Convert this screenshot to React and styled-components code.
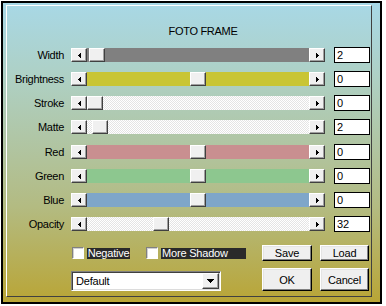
import React from 'react'
import styled, { createGlobalStyle } from 'styled-components'

const Global = createGlobalStyle`
  html, body { margin: 0; padding: 0; background: #fff; }
  body {
    font-family: "Liberation Sans", Arial, sans-serif;
    font-size: 11px;
    color: #000;
  }
`

const Frame = styled.div`
  margin: 1px 0 0 1px;
  width: 381px;
  height: 303px;
  box-sizing: border-box;
  border: 2px solid #000;
  padding: 2px 8px 5px 3px;
  background: linear-gradient(to bottom, #a8d8e6 0%, #aed0c4 25%, #b0c6a6 45%, #b3bb82 68%, #b9a536 100%);
`

const Panel = styled.div`
  height: 100%;
  box-sizing: border-box;
  border: 1px solid;
  border-color: #fff #404040 #404040 #fff;
`

const Title = styled.div`
  margin: 19px 0 5px;
  padding-left: 28px;
  height: 13px;
  line-height: 13px;
  text-align: center;
  letter-spacing: -0.3px;
`

const Row = styled.div`
  display: flex;
  align-items: center;
  height: 24px;
  margin-top: ${p => (p.$shift ? '1px' : '0')};
`

const Label = styled.div`
  width: 57px;
  margin-right: 7px;
  text-align: right;
  line-height: 13px;
  letter-spacing: -0.3px;
  white-space: nowrap;
`

const ScrollBar = styled.div`
  display: flex;
  width: 254px;
  height: 14px;
  margin-right: 9px;
`

const raised = `
  box-sizing: border-box;
  background: #f0f0f0;
  border: 1px solid;
  border-color: #fff #404040 #404040 #fff;
  box-shadow: inset -1px -1px #a0a0a0;
`

const ArrowButton = styled.div`
  ${raised}
  width: 16px;
  height: 14px;
  display: flex;
  align-items: center;
  justify-content: center;
`

const Track = styled.div`
  position: relative;
  flex: 1;
  background-color: ${p => p.$color || '#fff'};
  ${p =>
    p.$color
      ? ''
      : `background-image: repeating-conic-gradient(#e4e4e4 0 25%, #fff 0 50%);
         background-size: 2px 2px;`}
`

const Thumb = styled.div`
  ${raised}
  position: absolute;
  top: 0;
  width: 16px;
  height: 14px;
`

const ValueBox = styled.div`
  width: 36px;
  height: 16px;
  box-sizing: border-box;
  border: 1px solid #000;
  background: #fff;
  padding-left: 2px;
  line-height: 14px;
`

const Bottom = styled.div`
  display: flex;
  margin-top: 9px;
  padding-left: 64px;
`

const LeftCol = styled.div`
  width: 191px;
  height: 46px;
  display: flex;
  flex-direction: column;
  justify-content: space-between;
`

const CheckRow = styled.div`
  display: flex;
  align-items: center;
  height: 16px;
  padding-left: 1px;
`

const CheckBox = styled.div`
  width: 12px;
  height: 12px;
  box-sizing: border-box;
  background: #fff;
  border: 1px solid;
  border-color: #808080 #fff #fff #808080;
  box-shadow: inset 1px 1px #d0d0d0;
  margin-right: 3px;
`

const CheckLabel = styled.div`
  background: #2a2a2a;
  color: #fff;
  height: 11px;
  line-height: 11px;
  padding: 0 1px;
  letter-spacing: -0.2px;
  width: ${p => (p.$w ? `${p.$w}px` : 'auto')};
  box-sizing: border-box;
  margin-right: 16px;
  white-space: nowrap;
`

const Combo = styled.div`
  width: 150px;
  height: 20px;
  box-sizing: border-box;
  background: #fff;
  border: 1px solid;
  border-color: #808080 #fff #fff #808080;
  box-shadow: inset 1px 1px #404040, inset -1px -1px #dcdcdc;
  display: flex;
  align-items: center;
  justify-content: space-between;
  padding: 1px 1px 1px 4px;
`

const ComboText = styled.span`
  letter-spacing: -0.2px;
`

const DropButton = styled.div`
  ${raised}
  width: 17px;
  height: 16px;
  display: flex;
  align-items: center;
  justify-content: center;
`

const ButtonGrid = styled.div`
  display: grid;
  grid-template-columns: 50px 49px;
  grid-template-rows: 16px 23px;
  column-gap: 8px;
  row-gap: 7px;
`

const Button = styled.div`
  box-sizing: border-box;
  background: #efefef;
  border: 1px solid;
  border-color: #fff #000 #000 #fff;
  box-shadow: inset -1px -1px #808080, inset 1px 1px #e4e4e4;
  display: flex;
  align-items: center;
  justify-content: center;
  letter-spacing: -0.2px;
`

const LeftArrow = () => (
  <svg width="3" height="5" shapeRendering="crispEdges">
    <rect x="0" y="2" width="1" height="1" fill="#000" />
    <rect x="1" y="1" width="1" height="3" fill="#000" />
    <rect x="2" y="0" width="1" height="5" fill="#000" />
  </svg>
)

const RightArrow = () => (
  <svg width="3" height="5" shapeRendering="crispEdges">
    <rect x="0" y="0" width="1" height="5" fill="#000" />
    <rect x="1" y="1" width="1" height="3" fill="#000" />
    <rect x="2" y="2" width="1" height="1" fill="#000" />
  </svg>
)

const DownArrow = () => (
  <svg width="7" height="4" shapeRendering="crispEdges">
    <rect x="0" y="0" width="7" height="1" fill="#000" />
    <rect x="1" y="1" width="5" height="1" fill="#000" />
    <rect x="2" y="2" width="3" height="1" fill="#000" />
    <rect x="3" y="3" width="1" height="1" fill="#000" />
  </svg>
)

const sliders = [
  { name: 'Width', value: '2', pos: 2, color: '#808080' },
  { name: 'Brightness', value: '0', pos: 103, color: '#c9c534' },
  { name: 'Stroke', value: '0', pos: 0 },
  { name: 'Matte', value: '2', pos: 5 },
  { name: 'Red', value: '0', pos: 103, color: '#c98f90', shift: true },
  { name: 'Green', value: '0', pos: 103, color: '#8dc78f' },
  { name: 'Blue', value: '0', pos: 103, color: '#7fa6c9' },
  { name: 'Opacity', value: '32', pos: 66 },
]

function App() {
  return (
    <>
      <Global />
      <Frame>
        <Panel>
          <Title>FOTO FRAME</Title>
          {sliders.map(s => (
            <Row key={s.name} $shift={s.shift}>
              <Label>{s.name}</Label>
              <ScrollBar>
                <ArrowButton><LeftArrow /></ArrowButton>
                <Track $color={s.color}>
                  <Thumb style={{ left: `${s.pos}px` }} />
                </Track>
                <ArrowButton><RightArrow /></ArrowButton>
              </ScrollBar>
              <ValueBox>{s.value}</ValueBox>
            </Row>
          ))}
          <Bottom>
            <LeftCol>
              <CheckRow>
                <CheckBox />
                <CheckLabel>Negative</CheckLabel>
                <CheckBox />
                <CheckLabel $w={88}>More Shadow</CheckLabel>
              </CheckRow>
              <Combo>
                <ComboText>Default</ComboText>
                <DropButton><DownArrow /></DropButton>
              </Combo>
            </LeftCol>
            <ButtonGrid>
              <Button>Save</Button>
              <Button>Load</Button>
              <Button>OK</Button>
              <Button>Cancel</Button>
            </ButtonGrid>
          </Bottom>
        </Panel>
      </Frame>
    </>
  )
}

export default App
